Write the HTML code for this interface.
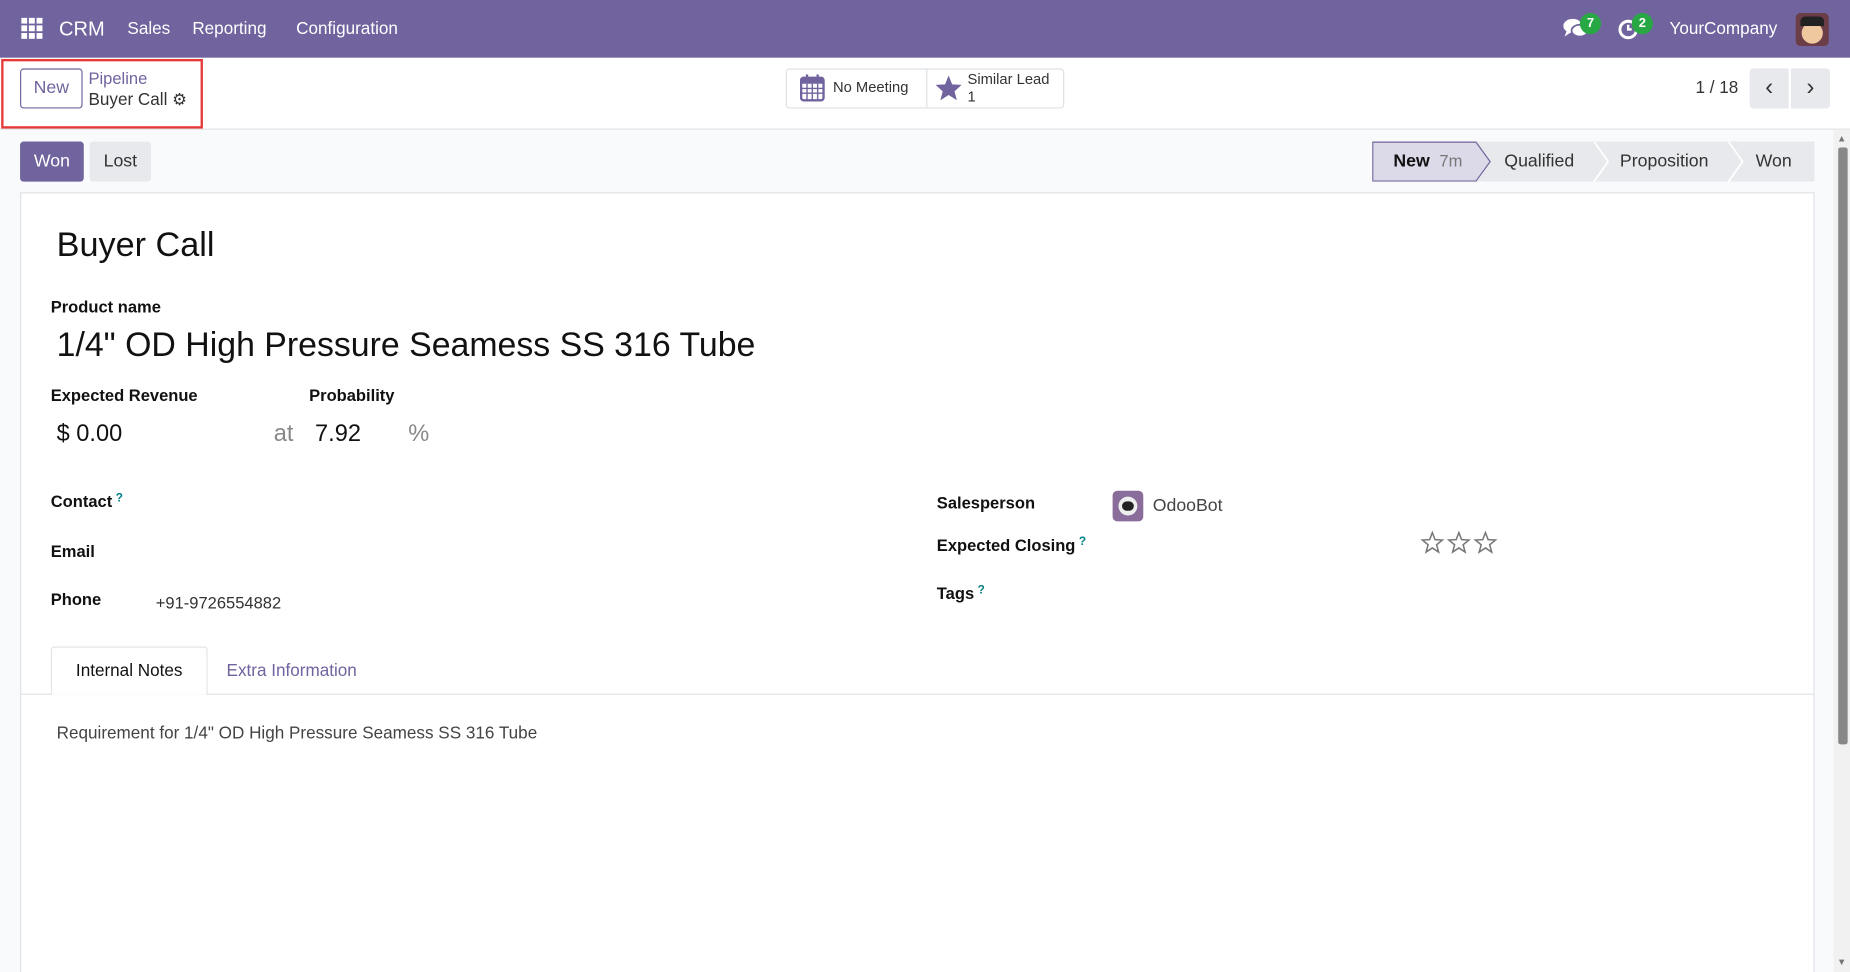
<!DOCTYPE html>
<html><head><meta charset="utf-8"><style>
*{box-sizing:border-box;margin:0;padding:0}
html,body{width:1850px;height:972px;overflow:hidden;background:#f9fafb}
#w{width:1568px;height:824px;position:relative;transform:scale(1.17985,1.1796);transform-origin:0 0;font-family:"Liberation Sans",sans-serif;color:#212529;font-size:14px;background:#f9fafb}
.a{position:absolute;white-space:nowrap}
.lbl{font-weight:bold;font-size:14px;color:#111}
.q{color:#017e84;font-size:10px;vertical-align:top;margin-left:3px;font-weight:bold}
</style></head><body><div id="w">
<div class="a" style="left:0;top:0;width:1568px;height:49px;background:#71639e"></div>
<svg class="a" style="left:18px;top:15px" width="18" height="18" fill="#fff"><g><rect x="0" y="0" width="5" height="5"/><rect x="6.5" y="0" width="5" height="5"/><rect x="13" y="0" width="5" height="5"/><rect x="0" y="6.5" width="5" height="5"/><rect x="6.5" y="6.5" width="5" height="5"/><rect x="13" y="6.5" width="5" height="5"/><rect x="0" y="13" width="5" height="5"/><rect x="6.5" y="13" width="5" height="5"/><rect x="13" y="13" width="5" height="5"/></g></svg>
<div class="a" style="left:50px;top:15px;font-size:17px;color:#fff">CRM</div>
<div class="a" style="left:108px;top:17px;font-size:14.5px;color:#fff">Sales</div>
<div class="a" style="left:163px;top:17px;font-size:14.5px;color:#fff">Reporting</div>
<div class="a" style="left:251px;top:17px;font-size:14.5px;color:#fff">Configuration</div>
<svg class="a" style="left:1325px;top:15px" width="22" height="20" fill="#fff"><ellipse cx="8" cy="7" rx="8" ry="6"/><path d="M3 11 L1 16 L7 12Z"/><ellipse cx="14" cy="11" rx="7" ry="5" stroke="#71639e" stroke-width="1.5"/></svg>
<div class="a" style="left:1339px;top:11px;width:18px;height:18px;border-radius:9px;background:#28a745;color:#fff;font-size:11px;font-weight:bold;text-align:center;line-height:18px">7</div>
<svg class="a" style="left:1371px;top:16px" width="20" height="20"><circle cx="9" cy="9" r="7" fill="none" stroke="#fff" stroke-width="2.5"/><path d="M9 5V9H12" stroke="#fff" stroke-width="2" fill="none"/></svg>
<div class="a" style="left:1383px;top:11px;width:18px;height:18px;border-radius:9px;background:#28a745;color:#fff;font-size:11px;font-weight:bold;text-align:center;line-height:18px">2</div>
<div class="a" style="left:1415px;top:17px;font-size:14.5px;color:#fff">YourCompany</div>
<div class="a" style="left:1522px;top:11px;width:28px;height:28px;border-radius:4px;background:#6b3d46;overflow:hidden"><div class="a" style="left:5px;top:8px;width:18px;height:18px;border-radius:9px;background:#f0c8a0"></div><div class="a" style="left:4px;top:3px;width:20px;height:8px;background:#222;border-radius:4px 4px 0 0"></div></div>

<div class="a" style="left:0;top:49px;width:1568px;height:61px;background:#fff;border-bottom:1px solid #dee2e6"></div>
<div class="a" style="left:1px;top:50px;width:171px;height:59px;border:2px solid #e63a3a"></div>
<div class="a" style="left:17px;top:58px;width:53px;height:34px;border:1px solid #71639e;border-radius:3px;color:#71639e;font-size:15px;text-align:center;line-height:32px">New</div>
<div class="a" style="left:75px;top:58px;font-size:14px;color:#71639e">Pipeline</div>
<div class="a" style="left:75px;top:76px;font-size:14.5px;color:#333">Buyer Call <span style="font-size:14px">⚙</span></div>
<div class="a" style="left:666px;top:58px;width:236px;height:34px;border:1px solid #dee2e6;border-radius:3px;background:#fff"></div>
<div class="a" style="left:785px;top:58px;width:1px;height:34px;background:#dee2e6"></div>
<svg class="a" style="left:678px;top:63px" width="22" height="23"><rect x="1" y="3" width="19" height="19" rx="2" fill="none" stroke="#71639e" stroke-width="2"/><rect x="1" y="3" width="19" height="5" fill="#71639e"/><path d="M1 12H20M1 16H20M6 8V22M10.5 8V22M15 8V22" stroke="#71639e" stroke-width="1.2"/><rect x="5" y="0" width="2" height="5" fill="#71639e"/><rect x="14" y="0" width="2" height="5" fill="#71639e"/></svg>
<div class="a" style="left:706px;top:67px;font-size:12.5px;color:#333">No Meeting</div>
<svg class="a" style="left:792px;top:63px" width="24" height="22"><path d="M12 1L15 8.5L23 9L17 14.5L19 22L12 17.5L5 22L7 14.5L1 9L9 8.5Z" fill="#71639e"/></svg>
<div class="a" style="left:820px;top:60px;font-size:12.5px;color:#333;line-height:15px">Similar Lead<br>1</div>
<div class="a" style="left:1437px;top:67px;font-size:14.5px;color:#333">1 / 18</div>
<div class="a" style="left:1483px;top:58px;width:33px;height:34px;background:#e7e9ed;border-radius:3px 0 0 3px;text-align:center;line-height:32px;font-size:20px;color:#333">‹</div>
<div class="a" style="left:1518px;top:58px;width:33px;height:34px;background:#e7e9ed;border-radius:0 3px 3px 0;text-align:center;line-height:32px;font-size:20px;color:#333">›</div>

<div class="a" style="left:17px;top:120px;width:54px;height:34px;background:#71639e;border-radius:3px;color:#fff;font-size:15px;text-align:center;line-height:34px">Won</div>
<div class="a" style="left:76px;top:120px;width:52px;height:34px;background:#e7e9ed;border-radius:3px;color:#333;font-size:15px;text-align:center;line-height:34px">Lost</div>
<svg class="a" style="left:1163px;top:120px" width="375" height="34">
<rect x="0" y="0" width="375" height="34" fill="#e7e9ed"/>
<path d="M0.5 0.5H88L100 17L88 33.5H0.5Z" fill="#dcd9e8" stroke="#71639e"/>
<path d="M188 0L200 17L188 34M302 0L314 17L302 34" stroke="#fff" stroke-width="1.5" fill="none"/>
</svg>
<div class="a" style="left:1181px;top:128px;font-size:15px;font-weight:bold;color:#111">New <span style="font-weight:normal;color:#777;font-size:14px;margin-left:4px">7m</span></div>
<div class="a" style="left:1275px;top:128px;font-size:15px;color:#333">Qualified</div>
<div class="a" style="left:1373px;top:128px;font-size:15px;color:#333">Proposition</div>
<div class="a" style="left:1488px;top:128px;font-size:15px;color:#333">Won</div>

<div class="a" style="left:17px;top:163px;width:1521px;height:670px;background:#fff;border:1px solid #dee2e6"></div>
<div class="a" style="left:48px;top:192px;font-size:29px;color:#111">Buyer Call</div>
<div class="a lbl" style="left:43px;top:252px">Product name</div>
<div class="a" style="left:48px;top:277px;font-size:28.7px;color:#111">1/4" OD High Pressure Seamess SS 316 Tube</div>
<div class="a lbl" style="left:43px;top:327px">Expected Revenue</div>
<div class="a lbl" style="left:262px;top:327px">Probability</div>
<div class="a" style="left:48px;top:357px;font-size:20px;color:#111">$ 0.00</div>
<div class="a" style="left:232px;top:357px;font-size:20px;color:#888">at</div>
<div class="a" style="left:267px;top:357px;font-size:20px;color:#111">7.92</div>
<div class="a" style="left:346px;top:357px;font-size:20px;color:#888">%</div>
<div class="a lbl" style="left:43px;top:417px">Contact<span class="q">?</span></div>
<div class="a lbl" style="left:43px;top:459px">Email</div>
<div class="a lbl" style="left:43px;top:500px">Phone</div>
<div class="a" style="left:132px;top:503px;font-size:14px;color:#333">+91-9726554882</div>
<div class="a lbl" style="left:794px;top:418px">Salesperson</div>
<div class="a" style="left:943px;top:416px;width:26px;height:26px;border-radius:4px;background:#8a6d9a"><div class="a" style="left:5px;top:5px;width:16px;height:16px;border-radius:8px;background:#eee"></div><div class="a" style="left:8px;top:9px;width:10px;height:8px;border-radius:4px;background:#222"></div></div>
<div class="a" style="left:977px;top:420px;font-size:15px;color:#444">OdooBot</div>
<div class="a lbl" style="left:794px;top:454px">Expected Closing<span class="q">?</span></div>
<div class="a lbl" style="left:794px;top:495px">Tags<span class="q">?</span></div>
<svg class="a" style="left:1204px;top:450px" width="68" height="21" fill="none" stroke="#777" stroke-width="1.3"><path id="s" d="M10 1.5L12.3 7.5L18.5 7.8L13.6 11.8L15.3 18L10 14.5L4.7 18L6.4 11.8L1.5 7.8L7.7 7.5Z"/><use href="#s" x="22.5"/><use href="#s" x="45"/></svg>
<div class="a" style="left:17px;top:588px;width:1521px;height:1px;background:#dee2e6"></div>
<div class="a" style="left:43px;top:548px;width:133px;height:41px;background:#fff;border:1px solid #dee2e6;border-bottom:none;border-radius:3px 3px 0 0;font-size:14.5px;color:#111;text-align:center;line-height:40px">Internal Notes</div>
<div class="a" style="left:192px;top:561px;font-size:14.5px;color:#71639e">Extra Information</div>
<div class="a" style="left:48px;top:614px;font-size:14.5px;color:#444">Requirement for 1/4" OD High Pressure Seamess SS 316 Tube</div>

<div class="a" style="left:1554px;top:110px;width:14px;height:714px;background:#f1f1f1"></div>
<div class="a" style="left:1558px;top:125px;width:8px;height:506px;background:#888;border-radius:2px"></div>
<div class="a" style="left:1557px;top:113px;font-size:8px;color:#777">▲</div>
<div class="a" style="left:1557px;top:811px;font-size:8px;color:#777">▼</div>
</div></body></html>
